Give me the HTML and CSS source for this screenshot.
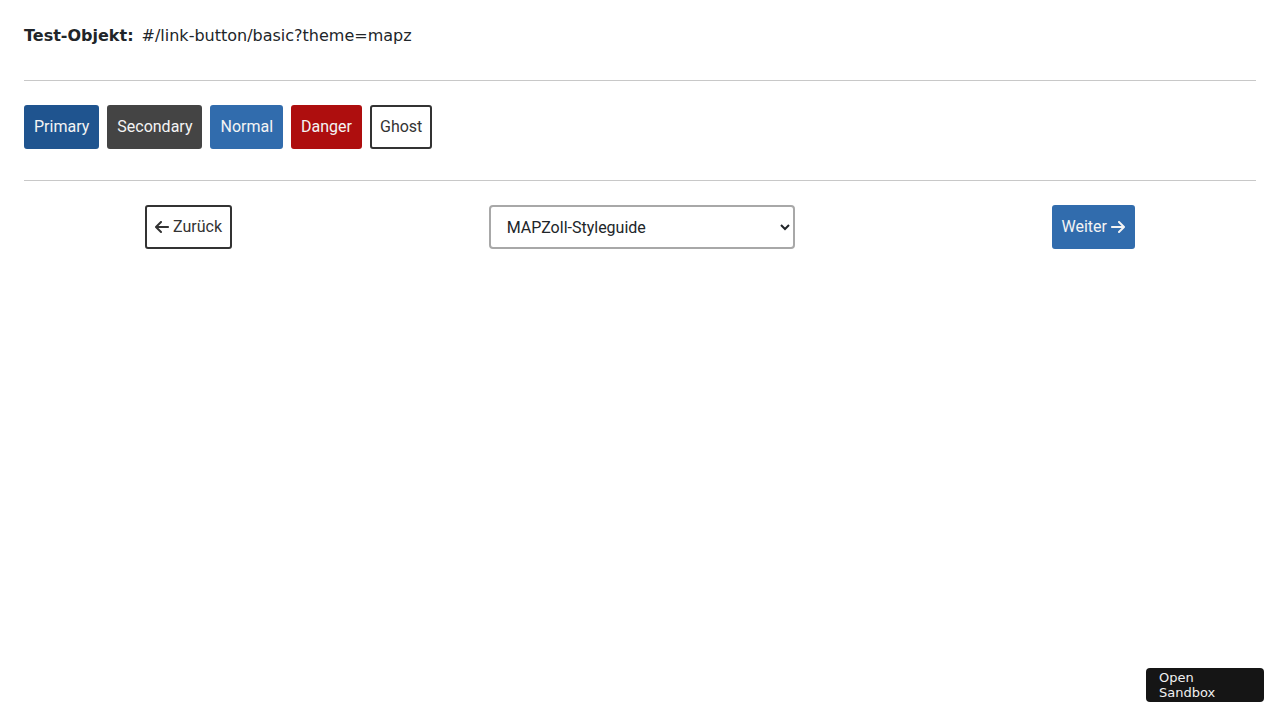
FILE: index.html
```html
<!DOCTYPE html>
<html lang="de">
<head>
<meta charset="utf-8">
<title>link-button basic</title>
<link rel="stylesheet" href="styles.css">
</head>
<body>
<div class="page">
  <div class="test-head">
    <span class="label">Test-Objekt:</span>
    <span class="value">#/link-button/basic?theme=mapz</span>
  </div>
  <hr class="sep">
  <div class="buttons">
    <a class="btn btn-primary" href="#">Primary</a>
    <a class="btn btn-secondary" href="#">Secondary</a>
    <a class="btn btn-normal" href="#">Normal</a>
    <a class="btn btn-danger" href="#">Danger</a>
    <a class="btn btn-ghost" href="#">Ghost</a>
  </div>
  <hr class="sep sep-2">
  <div class="nav">
    <a class="btn btn-ghost nav-btn" href="#"><svg class="ico" viewBox="0 0 448 512" width="14" height="16"><path fill="currentColor" d="M9.4 233.4c-12.5 12.5-12.5 32.8 0 45.300l160 160c12.5 12.5 32.8 12.5 45.3 0s12.5-32.8 0-45.3L109.2 288H416c17.7 0 32-14.3 32-32s-14.3-32-32-32H109.3L214.6 118.6c12.5-12.5 12.5-32.8 0-45.3s-32.8-12.5-45.3 0l-160 160z"/></svg>Zurück</a>
    <select class="chooser">
      <option>MAPZoll-Styleguide</option>
    </select>
    <a class="btn btn-normal nav-btn" href="#">Weiter<svg class="ico ico-r" viewBox="0 0 448 512" width="14" height="16"><path fill="currentColor" d="M438.6 278.6c12.5-12.5 12.5-32.8 0-45.3l-160-160c-12.5-12.5-32.8-12.5-45.3 0s-12.5 32.8 0 45.3L338.8 224H32c-17.7 0-32 14.3-32 32s14.3 32 32 32h306.7L233.4 393.4c-12.5 12.5-12.5 32.8 0 45.3s32.8 12.5 45.3 0l160-160z"/></svg></a>
  </div>
</div>
<div class="sandbox">Open<br>Sandbox</div>
</body>
</html>
```
FILE: styles.css
```css
html, body {
  margin: 0;
  padding: 0;
  background: #fff;
}
body {
  font-family: "DejaVu Sans", sans-serif;
  color: #212529;
}
.page {
  padding: 24px 24px;
}
.test-head {
  display: flex;
  align-items: baseline;
  gap: 8px;
  font-size: 16px;
  line-height: 24px;
}
.label {
  font-weight: bold;
}
.sep {
  border: 0;
  border-top: 1px solid #c8c8c8;
  margin: 32px 0 24px;
}
.sep-2 {
  margin: 31px 0 24px;
}
.buttons {
  display: flex;
  gap: 8px;
}
.btn {
  display: inline-flex;
  align-items: center;
  font-family: Roboto, sans-serif;
  font-size: 16px;
  line-height: 24px;
  padding: 8px 8px;
  border: 2px solid transparent;
  border-radius: 3px;
  text-decoration: none;
  color: #f4f4f4;
}
.btn-primary { background: #1f548f; border-color: #1f548f; }
.btn-secondary { background: #444444; border-color: #444444; }
.btn-normal { background: #316cad; border-color: #316cad; }
.btn-danger { background: #ae0e0e; border-color: #ae0e0e; }
.btn-ghost { background: #fff; border-color: #333; color: #333; }
.nav {
  display: flex;
  justify-content: space-between;
  align-items: center;
  padding: 0 121px;
}
.ico {
  width: 14px;
  height: 16px;
  margin-right: 4px;
}
.ico-r {
  margin-right: 0;
  margin-left: 4px;
}
.chooser {
  width: 306px;
  height: 44px;
  font-family: Roboto, sans-serif;
  font-size: 16px;
  color: #212529;
  background: #fff;
  border: 2px solid #a8a8a8;
  border-radius: 4px;
  padding: 0 8px 0 12px;
}
.sandbox {
  position: fixed;
  right: 16px;
  bottom: 18px;
  width: 105px;
  padding-left: 13px;
  padding-top: 2px;
  height: 32px;
  background: #151515;
  color: #f0f0f0;
  border-radius: 4px;
  font-family: "DejaVu Sans", sans-serif;
  font-size: 13px;
  line-height: 15px;
}
```
